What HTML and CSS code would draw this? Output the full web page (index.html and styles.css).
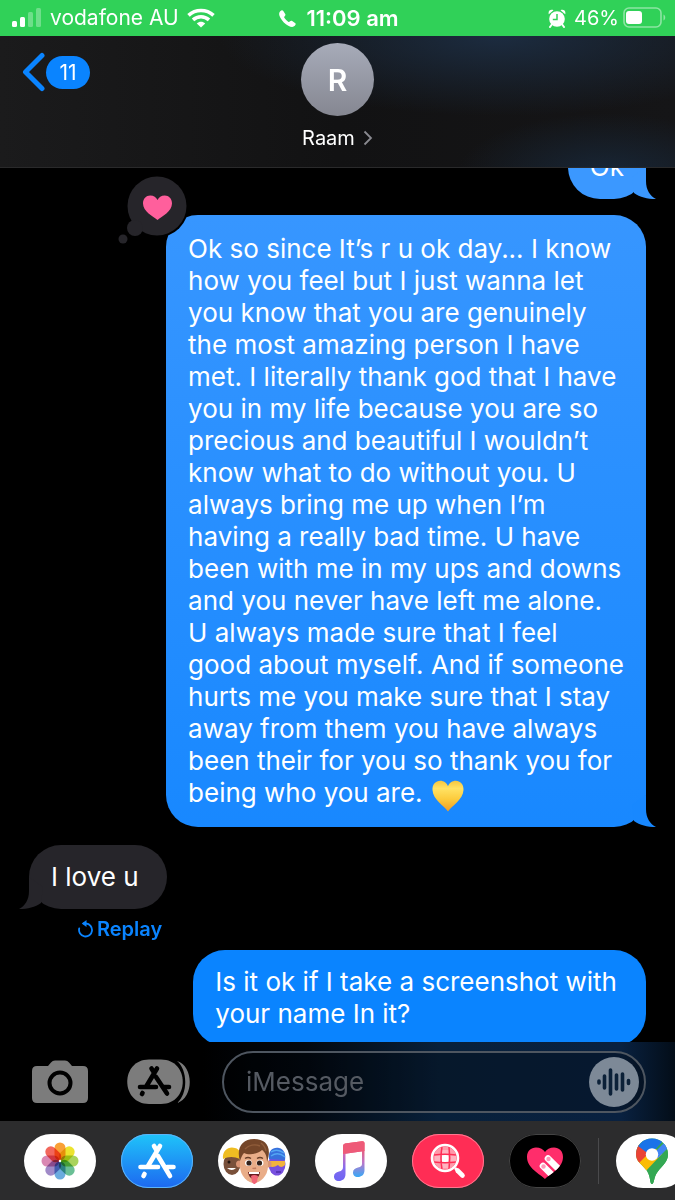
FILE: index.html
```html
<!DOCTYPE html>
<html lang="en">
<head>
    <meta charset="UTF-8">
    <meta name="viewport" content="width=device-width, initial-scale=1">
    <title>Raam</title>
    <link rel="stylesheet" href="styles.css">
</head>
<body>
<div class="status">
    <div class="status-left">
        <svg width="30" height="20" viewBox="0 0 30 20" fill="#fff">
            <rect x="0" y="13" width="5" height="6" rx="1.5"/>
            <rect x="8" y="9" width="5" height="10" rx="1.5"/>
            <rect x="16" y="4" width="5" height="15" rx="1.5" opacity=".3"/>
            <rect x="24" y="0" width="5" height="19" rx="1.5" opacity=".3"/>
        </svg>
        <span class="carrier">vodafone AU</span>
        <svg width="28" height="20" viewBox="0 0 28 20" fill="none" stroke="#fff" stroke-width="3.6">
            <path d="M1.5 7.3C8.600 .8 19.400 .8 26.500 7.300"/>
            <path d="M6 11.800C10.600 7.700 17.400 7.700 22 11.800"/>
            <path d="M14 19.500L9.800 15.400C12.200 13.200 15.800 13.200 18.200 15.400Z" fill="#fff" stroke="none"/>
        </svg>
    </div>
    <div class="status-mid">
        <svg width="17" height="17" viewBox="0 0 17 17" fill="#fff">
            <path d="M1.200 1.200C2.500 0 3.600 0 4.300 1L6.200 3.900C6.800 4.900 6.400 5.500 5.500 6.400C5 6.900 5.100 7.300 5.500 8C6.500 9.600 7.700 10.800 9.200 11.700C9.900 12.100 10.300 12.100 10.800 11.500C11.600 10.600 12.300 10.400 13.200 11L16 12.900C17.100 13.700 16.900 14.700 15.800 15.800C14.300 17.300 12.200 17.200 9.300 15.700C6 14 3.300 11.200 1.500 7.900C-.1 4.900-.4 2.800 1.200 1.200Z"/>
        </svg>
        <span>11:09 am</span>
    </div>
    <div class="status-right">
        <svg width="18" height="19" viewBox="0 0 18 19" fill="#fff">
            <circle cx="9" cy="10" r="7.800"/>
            <path d="M.8 5.200C-.2 2 2.500-.2 5.500 1.200ZM17.200 5.200C18.200 2 15.500-.2 12.500 1.200Z"/>
            <path d="M3.800 15.500L2 18M14.200 15.500L16 18" stroke="#fff" stroke-width="2" stroke-linecap="round"/>
            <path d="M9 5V10.500H4.800" fill="none" stroke="#30d158" stroke-width="1.500"/>
        </svg>
        <span>46%</span>
        <svg width="43" height="22" viewBox="0 0 43 22">
            <rect x="1" y="1" width="37" height="19" rx="5" fill="none" stroke="#fff" stroke-width="1.600" opacity=".45"/>
            <rect x="3" y="4" width="16" height="13" rx="3" fill="#fff"/>
            <path d="M40.500 7.500C42.800 8.500 42.800 12.500 40.500 13.500Z" fill="#fff" opacity=".45"/>
        </svg>
    </div>
</div>

<header class="header">
    <button class="back" aria-label="Back, 11 unread">
        <svg width="24" height="40" viewBox="0 0 24 40">
            <path d="M20 3.500L3.500 20L20 36.500" fill="none" stroke="#0a84ff" stroke-width="5" stroke-linecap="round" stroke-linejoin="round"/>
        </svg>
        <span class="unread">11</span>
    </button>
    <button class="contact">
        <span class="avatar">R</span>
        <span class="name">Raam
            <svg width="10" height="16" viewBox="0 0 10 16"><path d="M1.500 1.500L8 8L1.500 14.500" fill="none" stroke="#8a8a90" stroke-width="1.800"/></svg>
        </span>
    </button>
</header>

<main class="thread">
    <div class="messages">
        <div class="bubble sent first">Ok
            <svg class="tail" width="24" height="32" viewBox="0 0 24 32"><path d="M14 0V14C14 23 18 29 24 32C15 32 8 30 2 26L0 10Z" fill="currentColor"/></svg>
        </div>
        <div class="bubble sent long">
            Ok so since It’s r u ok day... I know<br>how you feel but I just wanna let<br>you know that you are genuinely<br>the most amazing person I have<br>met. I literally thank god that I have<br>you in my life because you are so<br>precious and beautiful I wouldn’t<br>know what to do without you. U<br>always bring me up when I’m<br>having a really bad time. U have<br>been with me in my ups and downs<br>and you never have left me alone.<br>U always made sure that I feel<br>good about myself. And if someone<br>hurts me you make sure that I stay<br>away from them you have always<br>been their for you so thank you for<br>being who you are.
            <svg class="emoji" width="32" height="32" viewBox="0 0 32 32" role="img" aria-label="yellow heart">
                <defs>
                    <linearGradient id="gold" x1="0" y1="0" x2="0" y2="1">
                        <stop offset="0" stop-color="#f6c63f"/>
                        <stop offset=".25" stop-color="#ffe264"/>
                        <stop offset=".6" stop-color="#fccb3c"/>
                        <stop offset="1" stop-color="#ee9b27"/>
                    </linearGradient>
                </defs>
                <path d="M16 31.500C12 25.500 1 20 .5 10C.2 4.300 3.800 .8 8.200 .8C11.800 .8 14.800 3 16 6.300C17.200 3 20.200 .8 23.800 .8C28.200 .8 31.800 4.300 31.500 10C31 20 20 25.500 16 31.500Z" fill="url(#gold)"/>
            </svg>
            <svg class="reaction" width="74" height="74" viewBox="0 0 74 74" role="img" aria-label="Loved">
                <circle cx="40" cy="32" r="31.500" fill="#000"/>
                <g fill="#26252a">
                    <circle cx="40" cy="32" r="29.500"/>
                    <circle cx="18" cy="54" r="8"/>
                    <circle cx="6" cy="65" r="4.500"/>
                </g>
                <path d="M40.500 46C36 42.500 26 37.500 26 29.500C26 24.500 29.200 21.500 33.200 21.500C36.800 21.500 39.300 23.500 40.500 26C41.700 23.500 44.200 21.500 47.800 21.500C51.800 21.500 55 24.500 55 29.500C55 37.500 45 42.500 40.500 46Z" fill="#ff5f9c"/>
            </svg>
            <svg class="tail" width="24" height="32" viewBox="0 0 24 32"><path d="M14 0V14C14 23 18 29 24 32C15 32 8 30 2 26L0 10Z" fill="currentColor"/></svg>
        </div>
        <div class="bubble received">I love u
            <svg class="tail" width="24" height="32" viewBox="0 0 24 32"><path d="M14 0V14C14 23 18 29 24 32C15 32 8 30 2 26L0 10Z" fill="currentColor"/></svg>
        </div>
        <button class="replay">
            <svg width="16" height="18" viewBox="0 0 16 18">
                <path d="M1.200 8.500A6.500 6.500 0 1 0 8 3.500H5.500" fill="none" stroke="#0a84ff" stroke-width="1.800" stroke-linecap="round"/>
                <path d="M8.500 0V7L3.800 3.500Z" fill="#0a84ff"/>
            </svg>Replay
        </button>
        <div class="bubble sent last">Is it ok if I take a screenshot with<br>your name In it?</div>
    </div>
</main>

<form class="composer">
    <button type="button" class="tool" aria-label="Camera">
        <svg width="56" height="46" viewBox="0 0 56 46">
            <path d="M5 7H16L19 3.500Q20.500 1.500 23 1.500H33Q35.500 1.500 37 3.500L40 7H51Q56 7 56 12V39Q56 44 51 44H5Q0 44 0 39V12Q0 7 5 7Z" fill="#7c7c7c"/>
            <circle cx="28" cy="24" r="10.500" fill="none" stroke="#000" stroke-width="4"/>
        </svg>
    </button>
    <button type="button" class="tool" aria-label="Apps">
        <svg width="64" height="46" viewBox="0 0 64 46">
            <path d="M50 2C67 7 67 39 50 44C61 35 61 11 50 2Z" fill="#7c7c7c"/>
            <path d="M22 .5H34C63 .5 63 45 34 45H22C-7 45-7 .5 22 .5Z" fill="#7c7c7c"/>
            <g fill="none" stroke="#000" stroke-width="4.600" stroke-linecap="round">
                <path d="M24.500 9.500L27 13.500M30 9.500L19.500 27M13 28H29M37 28H42M15.500 34L15 35"/>
                <path d="M29 18L40 34.500"/>
            </g>
        </svg>
    </button>
    <div class="field">
        <input type="text" placeholder="iMessage" aria-label="iMessage">
        <button type="button" class="audio" aria-label="Record audio">
            <svg width="36" height="30" viewBox="0 0 36 30" fill="none" stroke="#0c2138" stroke-width="3.600" stroke-linecap="round">
                <path d="M3 14V16M8.500 9V21M14.500 3V27M20.500 8V22M26.500 7V23M32.500 13.500V16.500"/>
            </svg>
        </button>
    </div>
</form>

<nav class="dock">
    <button class="app" aria-label="Photos">
        <svg width="72" height="54" viewBox="0 0 72 54">
            <defs><rect id="petal" x="-5.500" y="-18.500" width="11" height="18" rx="5.500"/></defs>
            <g class="petals" transform="translate(36 27)">
                <use href="#petal" fill="#f9a036"/>
                <use href="#petal" fill="#ece32e" transform="rotate(45)"/>
                <use href="#petal" fill="#a9d35c" transform="rotate(90)"/>
                <use href="#petal" fill="#6abf95" transform="rotate(135)"/>
                <use href="#petal" fill="#6aabde" transform="rotate(180)"/>
                <use href="#petal" fill="#a08ac8" transform="rotate(225)"/>
                <use href="#petal" fill="#da88b3" transform="rotate(270)"/>
                <use href="#petal" fill="#f2675c" transform="rotate(315)"/>
            </g>
            <circle cx="36" cy="27" r="1.200" fill="#fff"/>
        </svg>
    </button>
    <button class="app store" aria-label="App Store">
        <svg width="72" height="54" viewBox="0 0 72 54" fill="none" stroke="#fff" stroke-width="4.600" stroke-linecap="round">
            <path d="M33 12L36 17M39 12L27 32M19.500 33H37M46 33H52.500M23.500 40L22.500 42M37 22L49 42"/>
        </svg>
    </button>
    <button class="app" aria-label="Memoji">
        <svg width="72" height="54" viewBox="0 0 72 54">
            <!-- left head -->
            <ellipse cx="14" cy="30" rx="8.500" ry="11" fill="#79503a"/>
            <path d="M5 25C4 16 11 12 17 14C22 15 23 20 22 25Q13 21 5 25Z" fill="#efbd22"/>
            <circle cx="11" cy="28" r="1.500" fill="#221510"/>
            <path d="M9 34Q14 38 18 34Z" fill="#fff"/>
            <!-- right head -->
            <ellipse cx="59" cy="30" rx="8.500" ry="11.500" fill="#7750df"/>
            <path d="M51 25C50 16 55 13 61 14C66 15 68 20 67 26Z" fill="#3770dc"/>
            <path d="M53 18Q59 14 66 19M53 22Q60 17 67 23" fill="none" stroke="#53a6f3" stroke-width="1.500"/>
            <path d="M50 27H67V31Q63 35 60 31Q54 35 50 31Z" fill="#f2b33e"/>
            <path d="M58 38H63" stroke="#4c2ba9" stroke-width="1.500"/>
            <!-- front head -->
            <circle cx="21.500" cy="30" r="3.500" fill="#d99474"/>
            <circle cx="50" cy="30" r="3.500" fill="#d99474"/>
            <path d="M22 22C22 12 50 12 50 22V32C50 42 42 49 36 49S22 42 22 32Z" fill="#e9ad88"/>
            <path d="M22 27C18 14 24 5 36 5C49 5 54 14 49 28C49 22 47 18 44 16C38 21 30 21 26 19C24 21 23 24 22 27Z" fill="#754629"/>
            <path d="M27 15C31 11 37 10 42 12M43 9Q47 12 48 17" fill="none" stroke="#915d3b" stroke-width="1.500"/>
            <ellipse cx="30.500" cy="29" rx="3.500" ry="3" fill="#fff"/>
            <ellipse cx="42" cy="29" rx="3.500" ry="3" fill="#fff"/>
            <circle cx="31" cy="29" r="2.600" fill="#32211a"/>
            <circle cx="41.500" cy="29" r="2.600" fill="#32211a"/>
            <path d="M27 24.500Q30 22.500 33 24.500M39 24.500Q42 22.500 45 24.500" fill="none" stroke="#683f29" stroke-width="1.400"/>
            <path d="M34.500 34Q36 35 38 34" fill="none" stroke="#c17d60" stroke-width="1.500"/>
            <path d="M30 38H42Q41 45 36 45T30 38Z" fill="#681d21"/>
            <path d="M31 38H41V40H31Z" fill="#fff"/>
            <path d="M33 42Q36 40 40 42L39 48Q36 52 34 48Z" fill="#f06476"/>
        </svg>
    </button>
    <button class="app" aria-label="Music">
        <svg width="72" height="54" viewBox="0 0 72 54">
            <defs>
                <linearGradient id="note" x1=".6" y1="0" x2=".4" y2="1">
                    <stop offset="0" stop-color="#f94d65"/>
                    <stop offset=".35" stop-color="#d56ab0"/>
                    <stop offset=".7" stop-color="#846cf0"/>
                    <stop offset="1" stop-color="#6f65f2"/>
                </linearGradient>
                <linearGradient id="stem" x1="0" y1="0" x2="0" y2="1">
                    <stop offset="0" stop-color="#e8607f"/>
                    <stop offset=".45" stop-color="#bd76c9"/>
                    <stop offset="1" stop-color="#36a9f7"/>
                </linearGradient>
            </defs>
            <path d="M28 12Q28 10 30 9.500L47 7.200Q49.500 7 49.500 9V17L30.500 19.700V40C30.500 45 27 47 24 47C20.500 47 19 45 19 42.500C19 39.500 21 38 24 37.400Q28 37 28 33Z" fill="url(#note)"/>
            <path d="M28 12Q28 10 30 9.500L47 7.200Q49.500 7 49.500 9V17L28 20Z" fill="#ee5a78"/>
            <path d="M47 17L49.500 16.600V36C49.500 41 46 43 43 43C39.500 43 38 41 38 38.500C38 35.500 40 34 43 33.400Q47 33 47 30Z" fill="url(#stem)"/>
        </svg>
    </button>
    <button class="app images" aria-label="#images">
        <svg width="72" height="54" viewBox="0 0 72 54">
            <circle cx="33" cy="24" r="11.500" fill="#ff9aaa"/>
            <path d="M29 16H37L36.500 21H29.500ZM23 21H29V28H23ZM37 21H44V28H37ZM30 28H36.500L37 34H30Z" fill="#ffb3c0"/>
            <path d="M29.500 21H36.500V28H29.500Z" fill="#fff"/>
            <path d="M22 21Q33 19.500 44 21M22 28Q33 29.500 44 28M30 13Q28 24 30 35M37 13Q38.500 24 37 35" fill="none" stroke="#ff2d55" stroke-width="1.500"/>
            <circle cx="33" cy="24" r="13" fill="none" stroke="#fff" stroke-width="2.600"/>
            <path d="M43 34L44.500 35.500" stroke="#fff" stroke-width="2.500"/>
            <path d="M45.500 36.500L50.500 41.500" stroke="#fff" stroke-width="4.600" stroke-linecap="round"/>
        </svg>
    </button>
    <button class="app touch" aria-label="Digital Touch">
        <svg width="72" height="54" viewBox="0 0 72 54">
            <defs>
                <clipPath id="heart"><path d="M36 45C31 40 18 34 18 23C18 17 22 13.500 27 13.500C31 13.500 34.500 15.500 36 18C37.500 15.500 41 13.500 45 13.500C50 13.500 54 17 54 23C54 34 41 40 36 45Z"/></clipPath>
            </defs>
            <g clip-path="url(#heart)">
                <path d="M0 0H72V54H0Z" fill="#ff2d6b"/>
                <path d="M39 24.500L52 37.500M34 32L46 44" stroke="#fff" stroke-width="6.600" stroke-linecap="round"/>
                <circle cx="39.500" cy="25" r="2.200" fill="#ff9ab9"/>
                <circle cx="34.500" cy="32.500" r="2.200" fill="#ff9ab9"/>
            </g>
        </svg>
    </button>
    <span class="divider"></span>
    <button class="app" aria-label="Google Maps">
        <svg width="72" height="54" viewBox="0 0 72 54">
            <defs>
                <clipPath id="pin"><path d="M36 50C33.500 50 35 43 31 37C27 31 20 28 20 20.500C20 11 27 4.500 36 4.500S52 11 52 20.500C52 28 46 32 41.500 38C37.500 43 38.500 50 36 50Z"/></clipPath>
            </defs>
            <g clip-path="url(#pin)">
                <path d="M18 0H54V54H18Z" fill="#34a853"/>
                <path d="M18 26L34 10L46 20L27 40H18Z" fill="#fbbc04"/>
                <path d="M18 8L24 11L33 19L20 32Z" fill="#ea4335"/>
                <path d="M22 12L31 2H40L48 6L34 21Z" fill="#1a73e8"/>
                <path d="M49 8L34 23L42 24L52 14Z" fill="#4285f4"/>
                <path d="M53 13L29 40L36 54H54Z" fill="#34a853"/>
            </g>
            <circle cx="36" cy="20.500" r="6.200" fill="#fff"/>
        </svg>
    </button>
</nav>
</body>
</html>
```
FILE: styles.css
```css
* {
    box-sizing: border-box;
}

body {
    margin: 0;
    height: 100vh;
    display: flex;
    flex-direction: column;
    overflow: hidden;
    background: #000;
    color: #fff;
    font-family: Inter, "Liberation Sans", sans-serif;
}

button {
    padding: 0;
    border: 0;
    background: none;
    color: inherit;
    font: inherit;
    cursor: pointer;
}

svg {
    display: block;
    flex: none;
}

/* status bar */
.status {
    display: grid;
    grid-template-columns: 1fr auto 1fr;
    align-items: center;
    flex: none;
    height: 36px;
    padding: 0 9px 0 12px;
    background: #30d158;
    font-size: 20px;
    line-height: 24px;
}

.status-left,
.status-mid,
.status-right {
    display: flex;
    align-items: center;
    gap: 8px;
}

.carrier {
    font-size: 21px;
}

.status-mid {
    gap: 10px;
    font-size: 22px;
    font-weight: 600;
}

.status-right {
    justify-content: flex-end;
    gap: 4px;
}

.status-right span {
    padding-left: 4px;
}

/* header */
.header {
    display: grid;
    grid-template-columns: 1fr auto 1fr;
    align-items: start;
    flex: none;
    height: 132px;
    padding: 7px 22px 0;
    border-bottom: 1px solid #2a2a2b;
    background:
        radial-gradient(ellipse 150px 60px at 90% 105%, #182636, transparent),
        radial-gradient(ellipse 280px 80px at 74% 0, #1c2c40, transparent),
        linear-gradient(to right, #1b1b1c, #121213 50%, #151517);
}

.back {
    display: flex;
    align-items: center;
    margin-top: 9px;
    justify-self: start;
}

.unread {
    min-width: 44px;
    height: 33px;
    border-radius: 17px;
    background: #0a84ff;
    font-size: 21px;
    line-height: 33px;
}

.contact {
    display: flex;
    flex-direction: column;
    align-items: center;
    gap: 10px;
}

.avatar {
    width: 73px;
    height: 73px;
    border-radius: 50%;
    background: linear-gradient(#a7abb9, #858791);
    font-size: 30px;
    font-weight: 600;
    line-height: 74px;
}

.name {
    display: flex;
    align-items: center;
    gap: 8px;
    font-size: 20px;
    line-height: 24px;
}

/* conversation */
.thread {
    flex: 1;
    min-height: 0;
    overflow: hidden;
    padding: 0 29px;
}

/* scrolled so that the first message is partly under the header */
.messages {
    display: flex;
    flex-direction: column;
    align-items: flex-start;
    margin-top: -33px;
}

.bubble {
    position: relative;
    padding: 16px 28px 16px 22px;
    border-radius: 32px;
    font-size: 26px;
    line-height: 32px;
}

.sent {
    align-self: flex-end;
    background: #0a84ff;
}

.first {
    margin-bottom: 16px;
    padding: 16px 22px;
    background: #3b98ff;
}

.long {
    margin-bottom: 18px;
    padding: 18px 22px;
    background: linear-gradient(#3796ff, #1888ff);
}

.received {
    background: #26252a;
}

.last {
    padding: 16px 29px 16px 22px;
}

.tail {
    position: absolute;
    right: -10px;
    bottom: 0;
}

.first .tail {
    color: #3b98ff;
}

.long .tail {
    color: #1888ff;
}

.received .tail {
    right: auto;
    left: -10px;
    color: #26252a;
    transform: scaleX(-1);
}

.emoji {
    display: inline-block;
    margin: -4px 0 -4px 2px;
    vertical-align: -6px;
}

.reaction {
    position: absolute;
    left: -49px;
    top: -41px;
}

.replay {
    display: flex;
    align-items: center;
    gap: 3px;
    margin: 8px 0 9px 49px;
    color: #0a84ff;
    font-size: 20px;
    font-weight: 600;
    line-height: 24px;
}

/* input row */
.composer {
    display: flex;
    align-items: center;
    flex: none;
    height: 79px;
    padding: 0 29px 0 32px;
    background: linear-gradient(to right, #000 30%, #020810 45%, #08203a 65%, #092140 92%, #030d18);
}

.tool {
    margin-right: 39px;
}

.tool + .tool {
    margin-right: 31px;
}

.field {
    display: flex;
    align-items: center;
    flex: 1;
    min-width: 0;
    height: 62px;
    padding: 0 5px 0 22px;
    border: 2px solid #4e5660;
    border-radius: 31px;
    background: rgba(0, 0, 0, .25);
}

.field input {
    flex: 1;
    min-width: 0;
    padding: 0;
    border: 0;
    outline: none;
    background: none;
    color: #fff;
    font: inherit;
    font-size: 26px;
    line-height: 32px;
}

.field input::placeholder {
    color: #555a62;
    opacity: 1;
}

.audio {
    display: flex;
    align-items: center;
    justify-content: center;
    width: 50px;
    height: 50px;
    border-radius: 50%;
    background: #7d8997;
}

/* app strip */
.dock {
    display: flex;
    align-items: center;
    flex: none;
    gap: 25px;
    height: 79px;
    padding-left: 24px;
    overflow: hidden;
    background: #2c2c2d;
}

.app {
    flex: none;
    width: 72px;
    height: 54px;
    border-radius: 27px;
    background: #fff;
    overflow: hidden;
}

.petals use {
    mix-blend-mode: multiply;
}

.store {
    background: linear-gradient(#1fc4f9, #1d68f0);
    box-shadow: inset 0 0 0 1px #5cb4f8;
}

.images {
    background: #ff2d55;
    box-shadow: inset 0 0 0 1px #ff7890;
}

.touch {
    background: #000;
    box-shadow: inset 0 0 0 1px #444;
}

.divider {
    flex: none;
    width: 1px;
    height: 46px;
    margin: 0 -8px;
    background: #4a4a4c;
}
```
